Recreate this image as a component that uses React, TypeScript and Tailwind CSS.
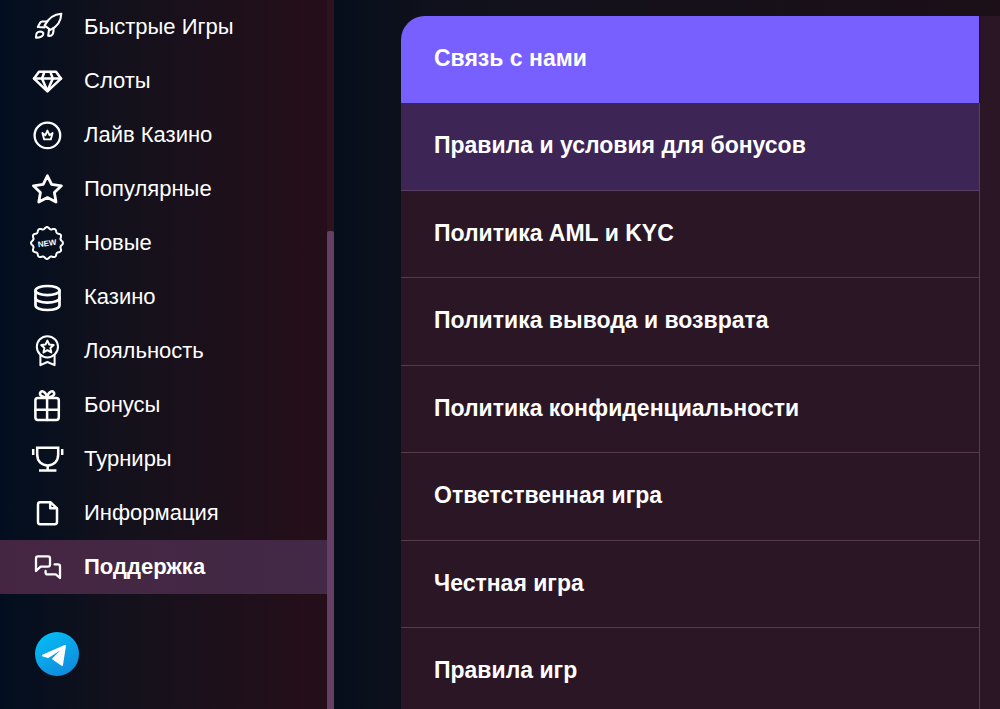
import type { ReactNode } from "react";
import clsx from "clsx";

type MenuItem = {
  label: string;
  icon: ReactNode;
  active?: boolean;
};

// wavy outline of the "new" badge
const badgePath =
  Array.from({ length: 121 }, (_, i) => {
    const a = (i / 120) * Math.PI * 2 - Math.PI / 2;
    const r = 15 + Math.cos(i * (Math.PI / 5));
    const x = 17 + r * Math.cos(a);
    const y = 17 + r * Math.sin(a);
    return `${i === 0 ? "M" : "L"}${x.toFixed(2)} ${y.toFixed(2)}`;
  }).join("") + "Z";

function Icon({ children, stroke = 2.3 }: { children: ReactNode; stroke?: number }) {
  return (
    <svg
      viewBox="0 0 34 34"
      className="size-[34px] shrink-0"
      fill="none"
      stroke="currentColor"
      strokeWidth={stroke}
      strokeLinecap="round"
      strokeLinejoin="round"
      aria-hidden="true"
    >
      {children}
    </svg>
  );
}

const menu: MenuItem[] = [
  {
    label: "Быстрые Игры",
    icon: (
      <Icon stroke={2.1}>
        <path d="M31.3 3.8C24.5 4.2 18.5 8 14.6 15.6L20.4 19.9C27.5 16.8 31 11 31.3 3.8Z" />
        <path d="M17.4 11.5H12.2Q10.8 11.5 10.1 12.8L7.8 17L14.4 17.4" />
        <path d="M19 19.8L18.2 25.8Q21.2 26.4 22.6 24.2Q23.8 21.5 23.6 18" />
        <path d="M6 27.6Q5.6 21.4 10.6 21.5Q13.8 22 13.2 24.6Q12 27.6 6 27.6Z" />
      </Icon>
    ),
  },
  {
    label: "Слоты",
    icon: (
      <Icon stroke={2.5}>
        <path d="M9 7.8H26L31 14.6L17.4 27.3L4 14.6Z" />
        <path d="M4 14.6H31" />
        <path d="M14.4 8L12 14.6L17.4 27L22.8 14.6L20.4 8" />
      </Icon>
    ),
  },
  {
    label: "Лайв Казино",
    icon: (
      <Icon>
        <circle cx="17.4" cy="17.4" r="12.8" />
        <path
          strokeWidth="1.9"
          d="M14.2 21.4L12.4 15L15.4 17.2L17.4 12.6L19.5 17.2L22.6 15L20.8 21.4Z"
        />
      </Icon>
    ),
  },
  {
    label: "Популярные",
    icon: (
      <Icon stroke={2.8}>
        <path d="M17.4 3.8L21.6 12.4L31.4 13.8L24.4 20.6L26 30L17.4 25.6L8.8 30L10.4 20.6L3.4 13.8L13.2 12.4Z" />
      </Icon>
    ),
  },
  {
    label: "Новые",
    icon: (
      <Icon stroke={2}>
        <path d={badgePath} />
        <text
          x="17"
          y="20"
          textAnchor="middle"
          fill="currentColor"
          stroke="none"
          transform="rotate(-8 17 17)"
          className="font-['Liberation_Sans'] text-[8px] font-bold"
        >
          NEW
        </text>
      </Icon>
    ),
  },
  {
    label: "Казино",
    icon: (
      <Icon stroke={2.7}>
        <ellipse cx="17.5" cy="10.6" rx="12" ry="4.6" />
        <path d="M5.5 10.6V25.2C5.5 28 10.8 30 17.5 30S29.5 28 29.5 25.2V10.6" />
        <path d="M5.5 18C5.5 20.6 10.8 22.6 17.5 22.6S29.5 20.6 29.5 18" />
      </Icon>
    ),
  },
  {
    label: "Лояльность",
    icon: (
      <Icon stroke={2}>
        <circle cx="17.4" cy="12.8" r="10.6" />
        <path d="M17.4 6.6L19.3 10.6L23.6 11.1L20.4 14.1L21.3 18.4L17.4 16.2L13.5 18.4L14.4 14.1L11.2 11.1L15.5 10.6Z" />
        <path d="M10.4 21.4V31.2L17.4 28L24.6 31.2V21.4" />
      </Icon>
    ),
  },
  {
    label: "Бонусы",
    icon: (
      <Icon stroke={2.5}>
        <rect x="5.4" y="10" width="23.4" height="22" rx="2.4" />
        <path d="M17.1 10V32M5.4 21.8H28.8" />
        <path d="M17.1 9.4C11.5 9.4 9.3 6.8 10.2 4.6C11.6 2.2 16 3.2 17.1 9.4Z" />
        <path d="M17.1 9.4C22.7 9.4 24.9 6.8 24 4.6C22.6 2.2 18.2 3.2 17.1 9.4Z" />
      </Icon>
    ),
  },
  {
    label: "Турниры",
    icon: (
      <Icon stroke={2.5}>
        <path
          strokeLinejoin="miter"
          d="M7.2 5.8H28.2V12.6C28.2 19.6 23.4 23.4 17.7 23.4S7.2 19.6 7.2 12.6Z"
        />
        <path strokeLinecap="butt" d="M17.7 23.4V28.4M9 28.6H26.4" />
        <path strokeLinecap="butt" d="M3.2 7V13M32.2 7V13" />
      </Icon>
    ),
  },
  {
    label: "Информация",
    icon: (
      <Icon stroke={2.5}>
        <path d="M10.2 6.2H20.4L27 12.4V26Q27 28.2 24.8 28.2H10.2Q8 28.2 8 26V8.4Q8 6.2 10.2 6.2Z" />
        <path d="M20.2 6.6V12.2H26.6" />
      </Icon>
    ),
  },
  {
    label: "Поддержка",
    active: true,
    icon: (
      <Icon>
        <path d="M6 21V8.4Q6 6.4 8 6.4H18Q20 6.4 20 8.4V14.6Q20 16.6 18 16.6H10.6Z" />
        <path d="M24.6 14.4H28Q30 14.4 30 16.4V28L25.8 24.4H17.6Q15.6 24.4 15.6 22.4V21" />
      </Icon>
    ),
  },
];

const topics = [
  "Связь с нами",
  "Правила и условия для бонусов",
  "Политика AML и KYC",
  "Политика вывода и возврата",
  "Политика конфиденциальности",
  "Ответственная игра",
  "Честная игра",
  "Правила игр",
];

function Sidebar() {
  return (
    <aside className="flex w-[334px] shrink-0 bg-linear-to-r from-[#020e1f] via-[#13111c] via-35% to-[#260e19]">
      <div className="min-w-0 flex-1">
        <nav>
          {menu.map((item) => (
            <a
              key={item.label}
              href="#"
              className={clsx(
                "flex h-[54px] items-center gap-5 px-[30px] text-[22px]",
                item.active && "bg-linear-to-r from-[#452642] to-[#422946] font-bold",
              )}
            >
              {item.icon}
              <span className="pb-0.5">{item.label}</span>
            </a>
          ))}
        </nav>
        <a href="#" aria-label="Telegram" className="mt-[38px] ml-[35px] block size-11">
          <svg viewBox="0 0 44 44" className="size-11" aria-hidden="true">
            <defs>
              <linearGradient id="tg" x1="0.2" y1="0" x2="0.8" y2="1">
                <stop offset="0" stopColor="#04bdf5" />
                <stop offset="1" stopColor="#1188dc" />
              </linearGradient>
            </defs>
            <circle cx="22" cy="22" r="22" fill="url(#tg)" />
            <path
              fill="#fff"
              d="M7.4 22.8L29.6 13.1Q31.1 12.7 30.9 14.2L28 33Q27.6 34.6 26.2 33.6L17.4 27.4Q16.8 26.8 17.4 26.2L25.4 18.2L14.2 25.6Q13.2 26.1 12.2 25.8L7.6 24.4Q6 23.7 7.4 22.8Z"
            />
          </svg>
        </a>
      </div>
      <div className="w-[7px] bg-[#2d121f] pt-[231px]">
        <div className="h-full rounded-t-xs bg-[#653f63]" />
      </div>
    </aside>
  );
}

function Topics() {
  return (
    <nav className="min-w-0 flex-1">
      {topics.map((topic, i) => (
        <a
          key={topic}
          href="#"
          className={clsx(
            "flex h-[87px] items-center border-r px-[33px] pb-0.5 text-[23px] font-bold even:h-[88px]",
            i === 0 && "border-[#1d1020] bg-[#7760ff]",
            i === 1 && "border-b border-[#593d62] bg-[#3d2656]",
            i > 1 && "border-b border-r-[#6b3547] border-b-[#573a47]",
          )}
        >
          {topic}
        </a>
      ))}
    </nav>
  );
}

export default function App() {
  return (
    <div className="flex h-screen overflow-hidden bg-[#0c101c] font-['Liberation_Sans',Arial,sans-serif] text-white">
      <Sidebar />
      <main className="min-w-0 flex-1 bg-linear-to-r from-[#060e1b] via-[#10111c] via-15% to-[#1c0f18] pt-4 pl-[67px]">
        <div className="flex overflow-hidden rounded-tl-3xl bg-[#2b1625] pr-5">
          <Topics />
        </div>
      </main>
    </div>
  );
}
